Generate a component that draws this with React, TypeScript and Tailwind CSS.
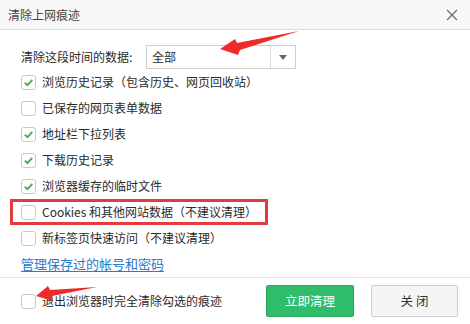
import React from "react";

const Check = ({ checked }: { checked?: boolean }) => (
  <span className="w-[15px] h-[15px] shrink-0 rounded-[3px] border border-[#c9c9c9] bg-white flex items-center justify-center">
    {checked && (
      <svg width="11" height="11" viewBox="0 0 11 11">
        <path d="M1.8 5.6 L4.4 8.1 L9.3 2.8" fill="none" stroke="#3aae5c" strokeWidth="1.8" />
      </svg>
    )}
  </span>
);

const Row = ({ checked, children }: { checked?: boolean; children: React.ReactNode }) => (
  <div className="h-[26px] flex items-center gap-[6px] pl-[21px]">
    <Check checked={checked} />
    <span className="whitespace-nowrap">{children}</span>
  </div>
);

export default function App() {
  return (
    <div
      className="relative w-[470px] h-[324px] bg-white text-[12px] text-[#2a2a2a] overflow-hidden"
      style={{ fontFamily: '"Microsoft YaHei", "Noto Sans CJK SC", sans-serif' }}
    >
      <div className="h-[30px] bg-[#f7f7f7] border-b border-[#dcdcdc] flex items-center justify-between pl-[8px] pr-[12px]">
        <span className="text-[12px] text-[#444]">清除上网痕迹</span>
        <svg width="12" height="12" viewBox="0 0 12 12">
          <path d="M1 1 L11 11 M11 1 L1 11" stroke="#666" strokeWidth="1.1" />
        </svg>
      </div>

      <div className="pt-[15px]">
        <div className="h-[24px] flex items-center pl-[21px]">
          <span className="w-[125px] whitespace-nowrap">清除这段时间的数据:</span>
          <div className="w-[150px] h-[24px] border border-[#cfcfcf] flex">
            <div className="flex-1 flex items-center pl-[5px]">全部</div>
            <div className="w-[25px] border-l border-[#dcdcdc] flex items-center justify-center">
              <svg width="8" height="5" viewBox="0 0 8 5">
                <path d="M0 0 L8 0 L4 5 Z" fill="#666" />
              </svg>
            </div>
          </div>
        </div>

        <Row checked>浏览历史记录（包含历史、网页回收站）</Row>
        <Row>已保存的网页表单数据</Row>
        <Row checked>地址栏下拉列表</Row>
        <Row checked>下载历史记录</Row>
        <Row checked>浏览器缓存的临时文件</Row>
        <div className="h-[26px] ml-[10px] w-[258px] border-[3px] border-[#e23b3e] flex items-center gap-[6px] pl-[8px]">
          <Check />
          <span className="whitespace-nowrap">Cookies 和其他网站数据（不建议清理）</span>
        </div>
        <Row>新标签页快速访问（不建议清理）</Row>
        <div className="h-[26px] flex items-center pl-[21px]">
          <a className="text-[13px] text-[#2b7acb] underline underline-offset-2">管理保存过的帐号和密码</a>
        </div>
      </div>

      <div className="border-t border-[#e3e3e3] h-[47px] flex items-center pl-[21px] pr-[12px]">
        <Check />
        <span className="ml-[6px] whitespace-nowrap">退出浏览器时完全清除勾选的痕迹</span>
        <div className="ml-auto flex gap-[17px]">
          <button className="w-[88px] h-[32px] rounded-[2px] bg-[#2fbd6b] border border-[#28a85d] text-white text-[12.5px]">
            立即清理
          </button>
          <button className="w-[87px] h-[32px] rounded-[2px] bg-[#f5f5f5] border border-[#cccccc] text-[#333] text-[12.5px]">
            关 闭
          </button>
        </div>
      </div>

      <svg className="absolute left-0 top-0 pointer-events-none" width="470" height="324" viewBox="0 0 470 324">
        <polygon points="220,49 235,39 237,43 299,31 240,50 238,55" fill="#ee2a2a" />
        <polygon points="36,296 48,286 50,290 97,287 52,296 53,301" fill="#ee2a2a" />
      </svg>
    </div>
  );
}
